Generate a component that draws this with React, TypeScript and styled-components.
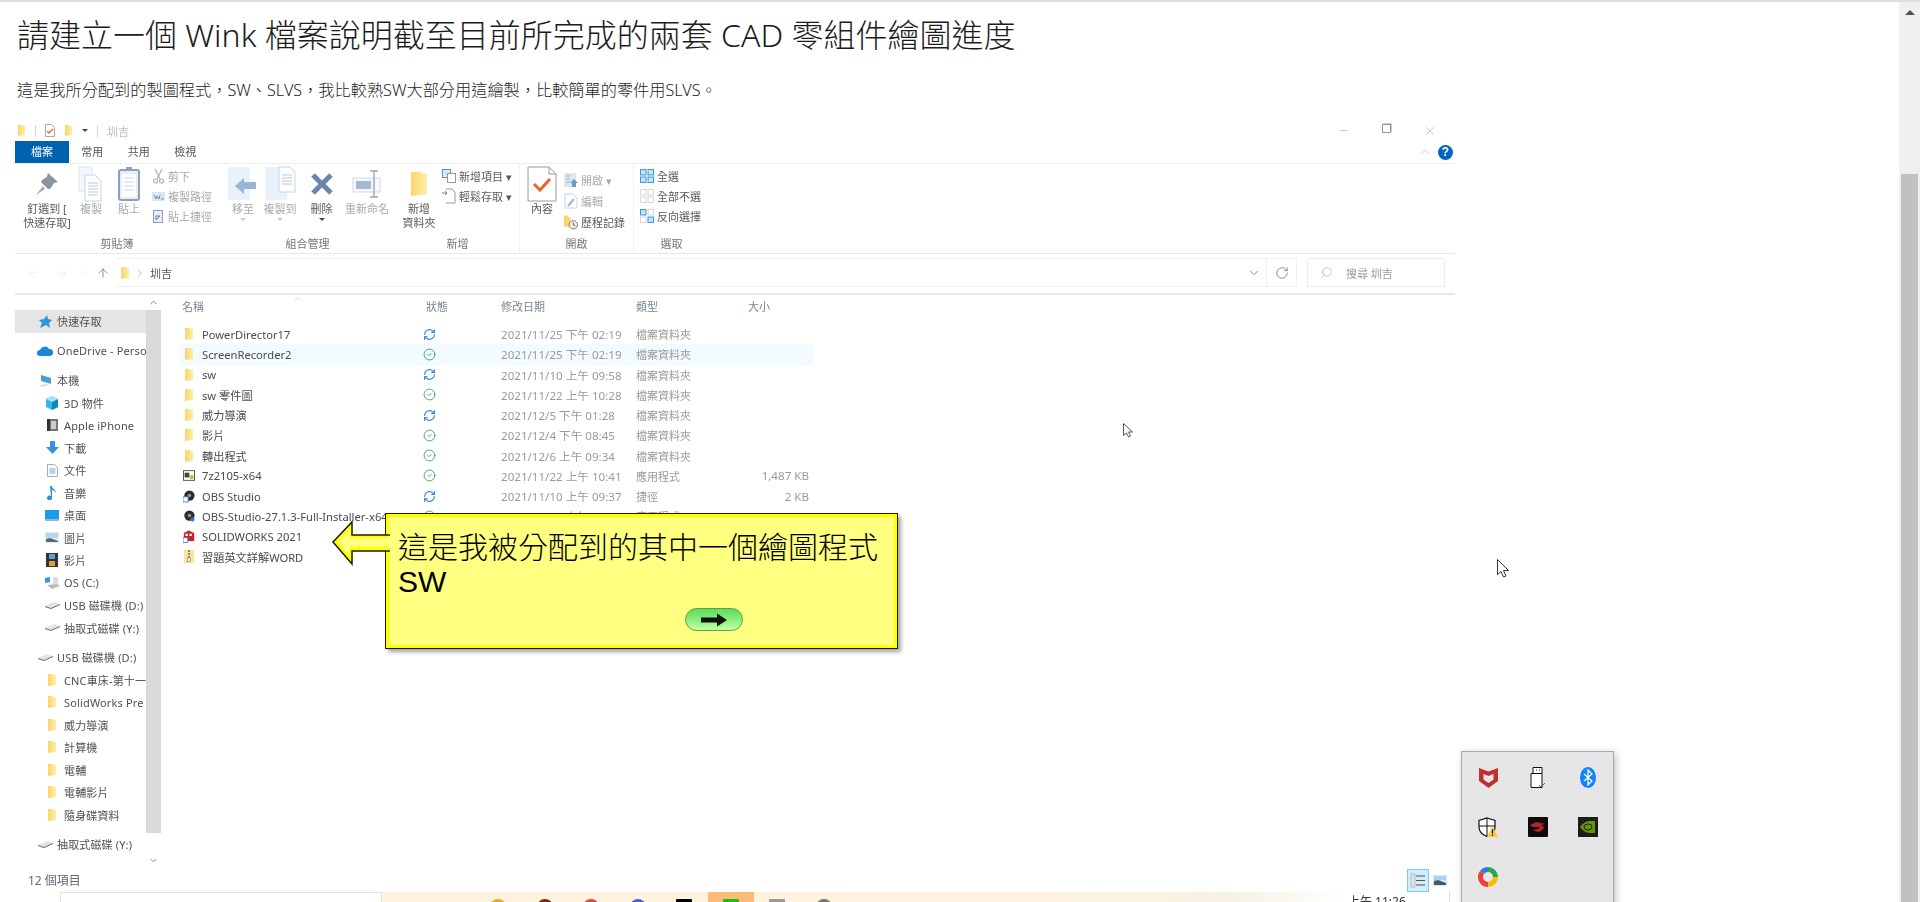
import React from 'react';
import styled, { createGlobalStyle } from 'styled-components';
import { ArrowLeft, ArrowRight, ArrowUp, ChevronDown, ChevronRight, ChevronUp, CircleCheck, Minus, RefreshCw, RotateCw, Search, X } from 'lucide-react';

const SANS = `"Noto Sans", "Noto Sans CJK TC", sans-serif`;

const Global = createGlobalStyle`
  html, body { margin: 0; padding: 0; background: #fff; overflow: hidden; }
  * { box-sizing: border-box; }
`;

const Page = styled.div`
  position: relative;
  display: flex;
  width: 1920px;
  height: 902px;
  overflow: hidden;
  border-top: 2px solid #dedede;
  font-family: ${SANS};
`;

const Main = styled.main`
  flex: 1;
  min-width: 0;
`;

const Title = styled.h1`
  margin: 0;
  padding: 13px 0 0 17px;
  height: 76px;
  font-size: 32px;
  line-height: 40px;
  font-weight: 300;
  color: #1c1c1c;
  white-space: nowrap;
`;

const Intro = styled.p`
  margin: 0;
  padding-left: 17px;
  height: 42px;
  font-size: 16.2px;
  line-height: 24px;
  font-weight: 300;
  color: #222;
  white-space: nowrap;
`;

const PageScroll = styled.div`
  width: 21px;
  background: #f0f0f0;
  padding: 172px 2px 0;
  position: relative;
`;

const PageScrollUp = styled.span`
  position: absolute;
  top: 8px;
  left: 6px;
  border-left: 5px solid transparent;
  border-right: 5px solid transparent;
  border-bottom: 5px solid #505050;
`;

const PageScrollThumb = styled.div`
  height: 100%;
  background: #c1c1c1;
`;

const Explorer = styled.section`
  width: 1440px;
  margin-left: 15px;
  height: 782px;
  overflow: hidden;
  color: #666;
  font-size: 11px;
  filter: blur(0.35px);
`;

const Qat = styled.div`
  display: flex;
  align-items: center;
  gap: 9px;
  height: 21px;
  padding: 0 4px 0 2px;
  color: #bdbdbd;
`;

const QatSep = styled.span`
  width: 1px;
  height: 12px;
  background: #d8d8d8;
`;

const WinButtons = styled.div`
  display: flex;
  margin-left: auto;
  color: #a0a0a0;
`;

const WinButton = styled.span`
  width: 43px;
  display: flex;
  justify-content: center;
`;

const MaxGlyph = styled.span`
  width: 9px;
  height: 9px;
  border: 1px solid #999;
  box-shadow: 1px -1px 0 -0.2px #bbb;
`;

const Tabs = styled.div`
  display: flex;
  align-items: center;
  height: 23px;
  border-bottom: 1px solid #efefef;
  padding-right: 2px;
`;

const Tab = styled.span<{ $active?: boolean }>`
  width: ${p => (p.$active ? '54px' : '46.5px')};
  height: 22px;
  line-height: 21px;
  text-align: center;
  font-size: 11px;
  color: ${p => (p.$active ? '#fff' : '#555')};
  background: ${p => (p.$active ? '#0063b1' : 'transparent')};
`;

const Help = styled.span`
  width: 15px;
  height: 15px;
  margin-left: 6px;
  border-radius: 50%;
  background: #0067c0;
  color: #fff;
  font: bold 12px/15px "Liberation Sans", sans-serif;
  text-align: center;
`;

const Ribbon = styled.div`
  display: flex;
  height: 90px;
  border-bottom: 1px solid #e9e9e9;
`;

const Group = styled.div<{ $w: number; $line?: boolean }>`
  width: ${p => p.$w}px;
  display: flex;
  flex-direction: column;
  border-right: 1px solid ${p => (p.$line ? '#f1f1f1' : 'transparent')};
`;

const GroupBody = styled.div<{ $pad?: number }>`
  display: flex;
  height: 73px;
  padding-left: ${p => p.$pad ?? 0}px;
`;

const GroupLabel = styled.div`
  height: 14px;
  line-height: 14px;
  text-align: center;
  color: #777;
`;

const Big = styled.div<{ $w: number; $dark?: boolean }>`
  width: ${p => p.$w}px;
  padding-top: 2px;
  display: flex;
  flex-direction: column;
  align-items: center;
  line-height: 14px;
  text-align: center;
  white-space: nowrap;
  color: ${p => (p.$dark ? '#5a5a5a' : '#a9a9a9')};
`;

const BigIcon = styled.div`
  height: 36px;
  display: flex;
  align-items: center;
  justify-content: center;
`;

const Caret = styled.span<{ $dark?: boolean }>`
  margin-top: 2px;
  border-left: 3px solid transparent;
  border-right: 3px solid transparent;
  border-top: 3px solid ${p => (p.$dark ? '#444' : '#ccc')};
`;

const QatCaret = styled(Caret)`
  margin-top: 0;
  width: 6px;
  border-top-color: #444;
`;

const Stack = styled.div<{ $top?: number; $row?: number }>`
  padding-top: ${p => p.$top ?? 2}px;
  display: grid;
  grid-auto-rows: ${p => p.$row ?? 20}px;
  align-items: center;
`;

const Small = styled.div<{ $dark?: boolean }>`
  display: flex;
  align-items: center;
  gap: 3px;
  white-space: nowrap;
  color: ${p => (p.$dark ? '#5a5a5a' : '#a9a9a9')};
`;

const SmallIcon = styled.span`
  width: 14px;
  height: 14px;
  display: flex;
  align-items: center;
  justify-content: center;
`;

const AddressRow = styled.div`
  display: flex;
  height: 41px;
  padding: 4px 10px 0 0;
  border-bottom: 2px solid #e8e8e8;
  color: #c9c9c9;
`;

const AddressNav = styled.div`
  width: 101px;
  padding-left: 4px;
  height: 29px;
  display: grid;
  grid-template-columns: 28px 29px 16px 22px;
  align-items: center;
  justify-items: center;
  color: #e2e2e2;
`;

const AddressBox = styled.div`
  flex: 1;
  height: 29px;
  display: flex;
  align-items: center;
  padding-left: 4px;
  gap: 5px;
  border: 1px solid #efefef;
  border-left: none;
  color: #555;
`;

const Refresh = styled.span`
  width: 30px;
  height: 27px;
  display: flex;
  align-items: center;
  justify-content: center;
  border-left: 1px solid #efefef;
  color: #777;
`;

const SearchBox = styled.div`
  width: 138px;
  height: 29px;
  margin-left: 10px;
  display: flex;
  align-items: center;
  gap: 13px;
  padding-left: 12px;
  border: 1px solid #ececec;
  color: #9a9a9a;
`;

const FlipSearch = styled(Search)`
  transform: scaleX(-1);
`;

const Body = styled.div`
  display: flex;
  height: 573px;
`;

const NavPane = styled.nav`
  width: 146px;
  display: flex;
  flex-shrink: 0;
`;

const Tree = styled.div`
  width: 131px;
  padding-top: 15px;
  overflow: hidden;
`;

const TreeRow = styled.div<{ $level: number; $gap?: boolean; $selected?: boolean }>`
  display: flex;
  align-items: center;
  gap: 4px;
  height: 22.5px;
  margin-top: ${p => (p.$gap ? 7 : 0)}px;
  padding-left: ${p => (p.$level === 1 ? 22 : 29)}px;
  background: ${p => (p.$selected ? '#e5e5e5' : 'transparent')};
  color: #4f4f4f;
  font-size: 11px;
  letter-spacing: 0.15px;
  white-space: nowrap;
`;

const TreeIcon = styled.span`
  width: 16px;
  height: 16px;
  flex-shrink: 0;
  display: flex;
  align-items: center;
  justify-content: center;
`;

const NavScroll = styled.div`
  width: 15px;
  display: flex;
  flex-direction: column;
  align-items: center;
  color: #555;
`;

const NavScrollEnd = styled.div<{ $h: number; $bottom?: boolean }>`
  height: ${p => p.$h}px;
  display: flex;
  align-items: ${p => (p.$bottom ? 'flex-end' : 'center')};
`;

const NavTrack = styled.div`
  width: 15px;
  height: 523px;
  background: #d9d9d9;
`;

const FileList = styled.div`
  flex: 1;
  padding-left: 19px;
`;

const Columns = `
  display: grid;
  grid-template-columns: 243px 78px 135px 100px 73px;
  align-items: center;
`;

const HeaderRow = styled.div`
  ${Columns}
  height: 22px;
  color: #7a8794;
  font-size: 11px;
  margin-bottom: 7px;
  position: relative;
`;

const HeaderCell = styled.span<{ $pad?: number }>`
  padding-left: ${p => p.$pad ?? 0}px;
`;

const SortMark = styled.span`
  position: absolute;
  left: 112px;
  top: -2px;
  color: #b8b8b8;
`;

const FileRow = styled.div<{ $hot?: boolean }>`
  ${Columns}
  width: 633px;
  height: 20.25px;
  background: ${p => (p.$hot ? '#f2fbff' : 'transparent')};
  font-size: 11.6px;
  color: #9a9a9a;
  white-space: nowrap;
`;

const NameCell = styled.span`
  display: flex;
  align-items: center;
  gap: 7px;
  padding-left: 3px;
  color: #4a4a4a;
  font-size: 11.2px;
`;

const FileIcon = styled.span`
  width: 12px;
  height: 14px;
  display: flex;
  align-items: center;
  justify-content: center;
`;

const StatusCell = styled.span`
  display: flex;
  width: 14px;
`;

const TypeCell = styled.span`
  font-size: 11px;
`;

const SizeCell = styled.span`
  text-align: right;
`;

const StatusBar = styled.div`
  display: flex;
  align-items: center;
  justify-content: space-between;
  height: 24px;
  padding: 0 8px 0 13px;
  color: #5d6b7a;
  font-size: 12px;
`;

const ViewIcons = styled.div`
  display: flex;
  align-items: center;
  gap: 4px;
`;

const DetailsView = styled.span`
  width: 22px;
  height: 23px;
  display: flex;
  align-items: center;
  justify-content: center;
  background: #cdeefd;
  border: 1px solid #7dcbf0;
`;

const Taskbar = styled.div`
  display: flex;
  height: 10px;
  padding-left: 45px;
  overflow: hidden;
`;

const TaskSearch = styled.div`
  width: 322px;
  height: 12px;
  background: #fff;
  border: 1px solid #e2e2e2;
`;

const TaskStrip = styled.div`
  width: 963px;
  padding-left: 93px;
  display: flex;
  background: linear-gradient(90deg, #fdf2dd 0%, #fdf3e0 70%, #f7f1e4 88%, #fff 100%);
`;

const TaskTile = styled.div<{ $active?: boolean }>`
  width: 46.5px;
  display: flex;
  justify-content: center;
  padding-top: 7px;
  background: ${p => (p.$active ? '#ffb97a' : 'transparent')};
`;

const TaskGlyph = styled.span<{ $color: string; $round?: boolean }>`
  width: 16px;
  height: 16px;
  background: ${p => p.$color};
  border-radius: ${p => (p.$round ? '50%' : '1px')};
`;

const Clock = styled.div`
  width: 105px;
  padding: 3px 0 0 3px;
  font-size: 12px;
  line-height: 14px;
  color: #333;
  border-right: 1px solid #ddd;
`;

const Callout = styled.aside`
  position: absolute;
  left: 385px;
  top: 511px;
  width: 513px;
  height: 136px;
  padding: 17px 0 0 12px;
  background: #ffff80;
  border: 1px solid #1c1c00;
  box-shadow: inset 0 0 0 3px #ffff00, 3px 3px 4px rgba(0, 0, 0, 0.35);
  font: 300 30px/34px "Liberation Sans", "Noto Sans CJK TC", sans-serif;
  color: #000;
`;

const CalloutArrow = styled.svg`
  position: absolute;
  left: -54px;
  top: 6px;
`;

const NextButton = styled.button`
  display: flex;
  align-items: center;
  justify-content: center;
  width: 58px;
  height: 23px;
  margin: 9px 0 0 287px;
  padding: 0;
  border: 1px solid #5f9f4c;
  border-radius: 12px;
  background: linear-gradient(180deg, #5fdc5f 0%, #8cf07c 55%, #c4ffa8 100%);
`;

const Tray = styled.aside`
  position: absolute;
  left: 1462px;
  top: 750px;
  width: 151px;
  height: 160px;
  padding-left: 1px;
  background: #e6e6e6;
  box-shadow: 0 0 0 1px #a8a8a8, 2px 2px 8px rgba(0, 0, 0, 0.3);
  display: grid;
  grid-template-columns: repeat(3, 50px);
  grid-auto-rows: 50px;
  place-items: center;
`;

const Cursor = styled.svg<{ $x: number; $y: number }>`
  position: absolute;
  left: ${p => p.$x}px;
  top: ${p => p.$y}px;
`;

const Folder = ({ w = 10, h = 12 }: { w?: number; h?: number }) => (
  <svg width={w} height={h} viewBox="0 0 10 12">
    <defs>
      <linearGradient id="fg" x1="0" x2="1" y1="0" y2="0">
        <stop offset="0" stopColor="#fbd46a" />
        <stop offset="1" stopColor="#ffeea8" />
      </linearGradient>
    </defs>
    <path d="M1 0h5l1 1h2v10l-8 1z" fill="url(#fg)" />
  </svg>
);

const Pin = () => (
  <svg width="30" height="30" viewBox="0 0 30 30">
    <path d="M16 4l10 9-4 1-4 6-2 0-7-7 1-2 5-3z" fill="#8b939b" />
    <path d="M11 17l-7 9 9-6z" fill="#a4abb2" />
  </svg>
);

const PagesIcon = () => (
  <svg width="26" height="36" viewBox="0 0 26 36">
    <path d="M1 1h13v24H1z" fill="#f4f7fb" stroke="#dbe3ee" />
    <path d="M7 9h10l6 6v20H7z" fill="#fff" stroke="#c3d3e6" />
    <path d="M10 17h10M10 20h10M10 23h10M10 26h10M10 29h10" stroke="#b5c8e0" />
  </svg>
);

const ClipboardIcon = () => (
  <svg width="22" height="36" viewBox="0 0 22 36">
    <rect x="1" y="4" width="20" height="30" rx="2" fill="#e8edf7" stroke="#8b9fc0" strokeWidth="2" />
    <rect x="4" y="8" width="14" height="23" fill="#fff" />
    <path d="M6 12h10M6 16h10M6 20h10M6 24h10" stroke="#c9d6ea" />
    <path d="M8 4h6V1H8z" fill="#8b9fc0" />
  </svg>
);

const Scissors = () => (
  <svg width="13" height="15" viewBox="0 0 13 15" fill="none" stroke="#aab3bd" strokeWidth="1.2">
    <path d="M3 0l5 10M10 0L5 10" />
    <circle cx="3.5" cy="12" r="2" />
    <circle cx="9.5" cy="12" r="2" />
  </svg>
);

const PathIcon = () => (
  <svg width="13" height="9" viewBox="0 0 13 9">
    <rect width="13" height="9" fill="#dbe6f3" />
    <path d="M2 3l2 4 1-3 2 3 1-4M9 7h3" stroke="#6f8fb3" fill="none" />
  </svg>
);

const ShortcutPaste = () => (
  <svg width="10" height="14" viewBox="0 0 10 14">
    <rect x=".5" y="1.5" width="9" height="12" fill="#e8edf7" stroke="#8b9fc0" />
    <path d="M3 11V7h4M3 11l4-4" stroke="#5b7fae" fill="none" />
  </svg>
);

const MoveIcon = ({ copy }: { copy?: boolean }) => (
  <svg width="34" height="36" viewBox="0 0 34 36">
    <path d="M2 1h22v33H2z" fill="#e9f1fb" />
    {copy ? (
      <>
        <path d="M16 1h11l5 5v20H16z" fill="#fff" stroke="#c3d3e6" />
        <path d="M19 9h10M19 12h10M19 15h10M19 18h10" stroke="#b5c8e0" />
      </>
    ) : (
      <path d="M28 14v7h-12v5l-9-8 9-8v4z" fill="#9ab4d6" transform="translate(2 2)" />
    )}
  </svg>
);

const DeleteIcon = () => (
  <svg width="24" height="24" viewBox="0 0 24 24">
    <path d="M3 3l18 18M21 3L3 21" stroke="#6d85ad" strokeWidth="5" />
  </svg>
);

const RenameIcon = () => (
  <svg width="30" height="30" viewBox="0 0 30 30">
    <rect x="1" y="9" width="27" height="14" fill="#f5f8fc" stroke="#d3dbe6" />
    <rect x="4" y="12" width="15" height="8" fill="#a7b9d2" />
    <path d="M22 2v26M18 2h8M18 28h8" stroke="#9aa8ba" strokeWidth="1.4" />
  </svg>
);

const NewItemIcon = () => (
  <svg width="14" height="14" viewBox="0 0 14 14">
    <rect x=".5" y=".5" width="8" height="8" fill="#dbe8f6" stroke="#5b8fc6" />
    <rect x="5.5" y="4.5" width="8" height="9" fill="#fff" stroke="#8f9aa6" />
  </svg>
);

const EasyIcon = () => (
  <svg width="14" height="16" viewBox="0 0 14 16" fill="none">
    <path d="M4 1h6l3 3v11H4" stroke="#8f9aa6" />
    <path d="M0 5h5M3 3l2 2-2 2" stroke="#3f8ed8" />
  </svg>
);

const PropsIcon = () => (
  <svg width="30" height="36" viewBox="0 0 30 36">
    <path d="M1 1h21l7 7v27H1z" fill="#fff" stroke="#9a9a9a" />
    <path d="M22 1v7h7" fill="none" stroke="#9a9a9a" />
    <path d="M7 18l6 6 10-11" fill="none" stroke="#e6652c" strokeWidth="3" />
  </svg>
);

const OpenIcon = () => (
  <svg width="14" height="16" viewBox="0 0 14 16">
    <rect x="0" y="1" width="12" height="14" fill="#dde7f2" />
    <path d="M2 4h4M2 7h4M2 10h4" stroke="#9fb2c9" />
    <path d="M10 7l4 4h-2v4H8v-4H6z" fill="#6f9bcb" />
  </svg>
);

const EditIcon = () => (
  <svg width="14" height="16" viewBox="0 0 14 16">
    <path d="M1 1h8l4 4v10H1z" fill="#fff" stroke="#c3d3e6" />
    <path d="M4 13l6-7" stroke="#9ab9da" strokeWidth="2" />
  </svg>
);

const HistoryIcon = () => (
  <svg width="15" height="16" viewBox="0 0 15 16">
    <path d="M0 1h4l1 2h2v10H0z" fill="#fbd46a" />
    <circle cx="10" cy="11" r="4.5" fill="#eee" stroke="#777" />
    <path d="M10 8.5V11l2 1" stroke="#555" fill="none" />
  </svg>
);

const SelectIcon = ({ mode }: { mode: 'all' | 'none' | 'invert' }) => {
  const on = '#3f96d8';
  const off = '#d8d8d8';
  const cells = mode === 'all' ? [1, 1, 1, 1] : mode === 'none' ? [0, 0, 0, 0] : [1, 0, 0, 1];
  return (
    <svg width="14" height="14" viewBox="0 0 14 14">
      {[[0, 0], [7.5, 0], [0, 7.5], [7.5, 7.5]].map(([x, y], i) => (
        <rect key={i} x={x + 0.5} y={y + 0.5} width="5.5" height="5.5" fill={cells[i] ? '#bfe3fa' : '#fff'} stroke={cells[i] ? on : off} />
      ))}
    </svg>
  );
};

const SevenZipIcon = () => (
  <svg width="15" height="13" viewBox="0 0 15 13">
    <rect x=".5" y=".5" width="14" height="12" fill="#fff" stroke="#333" />
    <rect x="2" y="3" width="6" height="6" fill="#444" />
    <rect x="9" y="6" width="4" height="5" fill="#e0a92c" />
  </svg>
);

const ObsIcon = ({ shortcut }: { shortcut?: boolean }) => (
  <svg width="14" height="14" viewBox="0 0 14 14">
    <circle cx="7.5" cy="6.5" r="6" fill="#2d2d2d" />
    <circle cx="7.5" cy="6.5" r="2" fill="#999" />
    {shortcut ? <rect x="0" y="8" width="6" height="6" fill="#fff" stroke="#3b78c4" /> : <circle cx="11" cy="11" r="2.5" fill="#3b78c4" />}
  </svg>
);

const SolidworksIcon = () => (
  <svg width="15" height="15" viewBox="0 0 15 15">
    <path d="M1 3l6-3 7 3v10H1z" fill="#c8202c" />
    <path d="M3 4h3v3H3zM8 4h3v3H8z" fill="#fff" />
    <rect x="0" y="9" width="6" height="6" fill="#fff" stroke="#3b78c4" />
  </svg>
);

const ZipIcon = () => (
  <svg width="10" height="13" viewBox="0 0 10 13">
    <path d="M0 0h10v13H0z" fill="#fde58f" />
    <path d="M4 0h2v2H4zM4 3h2v2H4zM4 6h2v2H4z" fill="#888" />
    <rect x="3.5" y="8" width="3" height="3.5" fill="#fff" stroke="#777" strokeWidth=".6" />
  </svg>
);

const Star = () => (
  <svg width="14" height="13" viewBox="0 0 14 13">
    <path d="M9 0l1 4 4 1-3 3 1 5-4-3-6 3 2-5-3-3 5-1z" fill="#2f93dd" />
  </svg>
);

const Cloud = () => (
  <svg width="16" height="10" viewBox="0 0 16 10">
    <path d="M3 10a3 3 0 0 1 0-6 5 5 0 0 1 9-1 3.5 3.5 0 0 1 1 7z" fill="#1a86d8" />
  </svg>
);

const PcIcon = () => (
  <svg width="15" height="13" viewBox="0 0 15 13">
    <path d="M3 1l10 3v6L3 7z" fill="#4a9ad8" />
    <path d="M0 11l9-1 3 1-7 2z" fill="#ddd" />
  </svg>
);

const CubeIcon = () => (
  <svg width="14" height="14" viewBox="0 0 14 14">
    <path d="M7 0l6 3v8l-6 3-6-3V3z" fill="#35b8e8" />
    <path d="M7 6l6-3v8l-6 3z" fill="#0f86c4" />
    <path d="M1 3l6-3 6 3-6 3z" fill="#a5e4f8" />
  </svg>
);

const PhoneIcon = () => (
  <svg width="11" height="12" viewBox="0 0 11 12">
    <rect width="11" height="12" fill="#777" />
    <rect x="0" width="3" height="12" fill="#333" />
    <rect x="4" y="2" width="5" height="8" fill="#ccc" />
  </svg>
);

const DownIcon = () => (
  <svg width="13" height="13" viewBox="0 0 13 13">
    <path d="M4 0h5v6h4l-6.500 7L0 6h4z" fill="#3f8ed8" />
  </svg>
);

const DocIcon = () => (
  <svg width="11" height="13" viewBox="0 0 11 13">
    <path d="M.5.5h7l3 3v9H.5z" fill="#fff" stroke="#aaa" />
    <path d="M2.500 5h6M2.500 7h6M2.500 9h6" stroke="#6fa3d6" />
  </svg>
);

const NoteIcon = () => (
  <svg width="10" height="14" viewBox="0 0 10 14">
    <path d="M3 0h2c0 3 4 3 4 7-1-2-2-3-4-3v8a2.500 2.500 0 1 1-1-2z" fill="#2d8fdc" />
  </svg>
);

const DesktopIcon = () => (
  <svg width="14" height="11" viewBox="0 0 14 11">
    <rect width="14" height="9" fill="#1b9ce8" />
    <rect y="9" width="14" height="2" fill="#8fb9d8" />
  </svg>
);

const PictureIcon = () => (
  <svg width="14" height="11" viewBox="0 0 14 11">
    <rect width="14" height="11" fill="#e4ebf2" />
    <rect x="1" y="1" width="12" height="5" fill="#b6d6ee" />
    <path d="M1 10V7l4-1 8 3v1z" fill="#4d6b78" />
  </svg>
);

const FilmIcon = () => (
  <svg width="12" height="14" viewBox="0 0 12 14">
    <rect width="12" height="14" fill="#333" />
    <rect x="3" y="1" width="6" height="5" fill="#5ba4d8" />
    <rect x="3" y="8" width="6" height="5" fill="#e0a040" />
  </svg>
);

const SystemDrive = () => (
  <svg width="15" height="13" viewBox="0 0 15 13">
    <path d="M0 2l5-1v5l-5 1z" fill="#3f96d8" />
    <path d="M2 9l10-1 3 2-8 3z" fill="#bbb" />
    <rect x="8" y="1" width="5" height="7" fill="#ddd" />
  </svg>
);

const DriveIcon = () => (
  <svg width="15" height="7" viewBox="0 0 15 7">
    <path d="M0 4l9-4 6 2-9 4z" fill="#e4e4e4" />
    <path d="M0 4l6 2 9-4v1L6 7 0 5z" fill="#666" />
  </svg>
);

const tree: { label: string; level: 1 | 2; icon: React.ReactNode; gap?: boolean; selected?: boolean }[] = [
  { label: '快速存取', level: 1, icon: <Star />, selected: true },
  { label: 'OneDrive - Perso', level: 1, icon: <Cloud />, gap: true },
  { label: '本機', level: 1, icon: <PcIcon />, gap: true },
  { label: '3D 物件', level: 2, icon: <CubeIcon /> },
  { label: 'Apple iPhone', level: 2, icon: <PhoneIcon /> },
  { label: '下載', level: 2, icon: <DownIcon /> },
  { label: '文件', level: 2, icon: <DocIcon /> },
  { label: '音樂', level: 2, icon: <NoteIcon /> },
  { label: '桌面', level: 2, icon: <DesktopIcon /> },
  { label: '圖片', level: 2, icon: <PictureIcon /> },
  { label: '影片', level: 2, icon: <FilmIcon /> },
  { label: 'OS (C:)', level: 2, icon: <SystemDrive /> },
  { label: 'USB 磁碟機 (D:)', level: 2, icon: <DriveIcon /> },
  { label: '抽取式磁碟 (Y:)', level: 2, icon: <DriveIcon /> },
  { label: 'USB 磁碟機 (D:)', level: 1, icon: <DriveIcon />, gap: true },
  { label: 'CNC車床-第十一', level: 2, icon: <Folder /> },
  { label: 'SolidWorks Pre', level: 2, icon: <Folder /> },
  { label: '威力導演', level: 2, icon: <Folder /> },
  { label: '計算機', level: 2, icon: <Folder /> },
  { label: '電輔', level: 2, icon: <Folder /> },
  { label: '電輔影片', level: 2, icon: <Folder /> },
  { label: '隨身碟資料', level: 2, icon: <Folder /> },
  { label: '抽取式磁碟 (Y:)', level: 1, icon: <DriveIcon />, gap: true },
];

type FileItem = { name: string; icon: React.ReactNode; status?: 'sync' | 'ok'; date?: string; type?: string; size?: string; hot?: boolean };

const FOLDER = '檔案資料夾';

const files: FileItem[] = [
  { name: 'PowerDirector17', icon: <Folder />, status: 'sync', date: '2021/11/25 下午 02:19', type: FOLDER },
  { name: 'ScreenRecorder2', icon: <Folder />, status: 'ok', date: '2021/11/25 下午 02:19', type: FOLDER, hot: true },
  { name: 'sw', icon: <Folder />, status: 'sync', date: '2021/11/10 上午 09:58', type: FOLDER },
  { name: 'sw 零件圖', icon: <Folder />, status: 'ok', date: '2021/11/22 上午 10:28', type: FOLDER },
  { name: '威力導演', icon: <Folder />, status: 'sync', date: '2021/12/5 下午 01:28', type: FOLDER },
  { name: '影片', icon: <Folder />, status: 'ok', date: '2021/12/4 下午 08:45', type: FOLDER },
  { name: '轉出程式', icon: <Folder />, status: 'ok', date: '2021/12/6 上午 09:34', type: FOLDER },
  { name: '7z2105-x64', icon: <SevenZipIcon />, status: 'ok', date: '2021/11/22 上午 10:41', type: '應用程式', size: '1,487 KB' },
  { name: 'OBS Studio', icon: <ObsIcon shortcut />, status: 'sync', date: '2021/11/10 上午 09:37', type: '捷徑', size: '2 KB' },
  { name: 'OBS-Studio-27.1.3-Full-Installer-x64', icon: <ObsIcon />, status: 'ok', date: '2021/11/10 上午 09:35', type: '應用程式', size: '93,912 KB' },
  { name: 'SOLIDWORKS 2021', icon: <SolidworksIcon /> },
  { name: '習題英文詳解WORD', icon: <ZipIcon /> },
];

const ExplorerWindow = () => (
  <Explorer>
    <Qat>
      <Folder w={9} h={11} />
      <QatSep />
      <svg width="10" height="13" viewBox="0 0 10 13">
        <path d="M.5.5h6l3 3v9H.5z" fill="#fff" stroke="#aaa" />
        <path d="M2 7l2 2 4-4" stroke="#e6652c" fill="none" strokeWidth="1.4" />
      </svg>
      <Folder w={9} h={11} />
      <QatCaret />
      <QatSep />
      <span>圳吉</span>
      <WinButtons>
        <WinButton><Minus size={13} strokeWidth={1} /></WinButton>
        <WinButton><MaxGlyph /></WinButton>
        <WinButton><X size={14} strokeWidth={1} /></WinButton>
      </WinButtons>
    </Qat>
    <Tabs>
      <Tab $active>檔案</Tab>
      <Tab>常用</Tab>
      <Tab>共用</Tab>
      <Tab>檢視</Tab>
      <ChevronUp size={14} strokeWidth={1} color="#aaa" style={{ marginLeft: 'auto' }} />
      <Help>?</Help>
    </Tabs>
    <Ribbon>
      <Group $w={205}>
        <GroupBody $pad={4}>
          <Big $w={56} $dark><BigIcon><Pin /></BigIcon>釘選到 [<br />快速存取]</Big>
          <Big $w={32}><BigIcon><PagesIcon /></BigIcon>複製</Big>
          <Big $w={44}><BigIcon><ClipboardIcon /></BigIcon>貼上</Big>
          <Stack>
            <Small><SmallIcon><Scissors /></SmallIcon>剪下</Small>
            <Small><SmallIcon><PathIcon /></SmallIcon>複製路徑</Small>
            <Small><SmallIcon><ShortcutPaste /></SmallIcon>貼上捷徑</Small>
          </Stack>
        </GroupBody>
        <GroupLabel>剪貼簿</GroupLabel>
      </Group>
      <Group $w={176}>
        <GroupBody $pad={5}>
          <Big $w={36}><BigIcon><MoveIcon /></BigIcon>移至<Caret /></Big>
          <Big $w={38}><BigIcon><MoveIcon copy /></BigIcon>複製到<Caret /></Big>
          <Big $w={45} $dark><BigIcon><DeleteIcon /></BigIcon>刪除<Caret $dark /></Big>
          <Big $w={46}><BigIcon><RenameIcon /></BigIcon>重新命名</Big>
        </GroupBody>
        <GroupLabel>組合管理</GroupLabel>
      </Group>
      <Group $w={124} $line>
        <GroupBody>
          <Big $w={46} $dark><BigIcon><Folder w={20} h={32} /></BigIcon>新增<br />資料夾</Big>
          <Stack>
            <Small $dark><SmallIcon><NewItemIcon /></SmallIcon>新增項目 ▾</Small>
            <Small $dark><SmallIcon><EasyIcon /></SmallIcon>輕鬆存取 ▾</Small>
          </Stack>
        </GroupBody>
        <GroupLabel>新增</GroupLabel>
      </Group>
      <Group $w={114} $line>
        <GroupBody>
          <Big $w={44} $dark><BigIcon><PropsIcon /></BigIcon>內容</Big>
          <Stack $top={5} $row={21}>
            <Small><SmallIcon><OpenIcon /></SmallIcon>開啟 ▾</Small>
            <Small><SmallIcon><EditIcon /></SmallIcon>編輯</Small>
            <Small $dark><SmallIcon><HistoryIcon /></SmallIcon>歷程記錄</Small>
          </Stack>
        </GroupBody>
        <GroupLabel>開啟</GroupLabel>
      </Group>
      <Group $w={76}>
        <GroupBody $pad={6}>
          <Stack>
            <Small $dark><SmallIcon><SelectIcon mode="all" /></SmallIcon>全選</Small>
            <Small $dark><SmallIcon><SelectIcon mode="none" /></SmallIcon>全部不選</Small>
            <Small $dark><SmallIcon><SelectIcon mode="invert" /></SmallIcon>反向選擇</Small>
          </Stack>
        </GroupBody>
        <GroupLabel>選取</GroupLabel>
      </Group>
    </Ribbon>
    <AddressRow>
      <AddressNav>
        <ArrowLeft size={14} strokeWidth={1} />
        <ArrowRight size={14} strokeWidth={1} />
        <ChevronDown size={10} strokeWidth={1} />
        <ArrowUp size={14} strokeWidth={1.2} color="#666" />
      </AddressNav>
      <AddressBox>
        <Folder />
        <ChevronRight size={10} strokeWidth={1} />
        <span>圳吉</span>
        <ChevronDown size={14} strokeWidth={1.4} color="#777" style={{ marginLeft: 'auto' }} />
        <Refresh><RotateCw size={14} strokeWidth={1.4} /></Refresh>
      </AddressBox>
      <SearchBox>
        <FlipSearch size={13} strokeWidth={1} />
        <span>搜尋 圳吉</span>
      </SearchBox>
    </AddressRow>
    <Body>
      <NavPane>
        <Tree>
          {tree.map((t, i) => (
            <TreeRow key={i} $level={t.level} $gap={t.gap} $selected={t.selected}>
              <TreeIcon>{t.icon}</TreeIcon>
              {t.label}
            </TreeRow>
          ))}
        </Tree>
        <NavScroll>
          <NavScrollEnd $h={15}><ChevronUp size={11} strokeWidth={1.5} /></NavScrollEnd>
          <NavTrack />
          <NavScrollEnd $h={33} $bottom><ChevronDown size={11} strokeWidth={1.5} /></NavScrollEnd>
        </NavScroll>
      </NavPane>
      <FileList>
        <HeaderRow>
          <HeaderCell $pad={2}>名稱</HeaderCell>
          <HeaderCell $pad={3}>狀態</HeaderCell>
          <HeaderCell>修改日期</HeaderCell>
          <HeaderCell>類型</HeaderCell>
          <HeaderCell $pad={12}>大小</HeaderCell>
          <SortMark><ChevronUp size={12} strokeWidth={1} /></SortMark>
        </HeaderRow>
        {files.map(f => (
          <FileRow key={f.name} $hot={f.hot}>
            <NameCell><FileIcon>{f.icon}</FileIcon>{f.name}</NameCell>
            <StatusCell>
              {f.status === 'sync' && <RefreshCw size={13} strokeWidth={2} color="#2a87d8" />}
              {f.status === 'ok' && <CircleCheck size={13} strokeWidth={1.6} color="#2f9e56" />}
            </StatusCell>
            <span>{f.date}</span>
            <TypeCell>{f.type}</TypeCell>
            <SizeCell>{f.size}</SizeCell>
          </FileRow>
        ))}
      </FileList>
    </Body>
    <StatusBar>
      <span>12 個項目</span>
      <ViewIcons>
        <DetailsView>
          <svg width="16" height="15" viewBox="0 0 16 15">
            <rect x="1" y="1" width="4" height="13" fill="#e8e0d8" stroke="#999" strokeWidth=".5" />
            <path d="M6 3h9M6 7.500h9M6 12h9" stroke="#555" />
          </svg>
        </DetailsView>
        <svg width="14" height="11" viewBox="0 0 14 11">
          <rect width="14" height="11" fill="#dfe9f2" />
          <rect x="1" y="1" width="12" height="4" fill="#a9d2ee" />
          <path d="M1 10V6l4-1 8 3v2z" fill="#3f5d60" />
        </svg>
      </ViewIcons>
    </StatusBar>
    <Taskbar>
      <TaskSearch />
      <TaskStrip>
        <TaskTile><TaskGlyph $color="#e8a820" $round /></TaskTile>
        <TaskTile><TaskGlyph $color="#7a2a10" $round /></TaskTile>
        <TaskTile><TaskGlyph $color="#d84a3a" $round /></TaskTile>
        <TaskTile><TaskGlyph $color="#4a5fe0" $round /></TaskTile>
        <TaskTile><TaskGlyph $color="#000" /></TaskTile>
        <TaskTile $active><TaskGlyph $color="#0fc40f" /></TaskTile>
        <TaskTile><TaskGlyph $color="#999" /></TaskTile>
        <TaskTile><TaskGlyph $color="#777" $round /></TaskTile>
      </TaskStrip>
      <Clock>上午 11:26</Clock>
    </Taskbar>
  </Explorer>
);

const App: React.FC = () => (
  <>
    <Global />
    <Page>
      <Main>
        <Title>請建立一個 Wink 檔案說明截至目前所完成的兩套 CAD 零組件繪圖進度</Title>
        <Intro>這是我所分配到的製圖程式，SW、SLVS，我比較熟SW大部分用這繪製，比較簡單的零件用SLVS。</Intro>
        <ExplorerWindow />
      </Main>
      <PageScroll>
        <PageScrollUp />
        <PageScrollThumb />
      </PageScroll>

      <Callout>
        <CalloutArrow width="58" height="46" viewBox="0 0 58 46">
          <path d="M1 22L20 2v13h38v16H20v13z" fill="#ffff00" stroke="#1c1c00" strokeWidth="1.500" />
          <path d="M6 22l12-13v9h40v9H18v9z" fill="#ffff80" />
          <path d="M57 15.700v14.600h2V15.700z" fill="#ffff80" />
        </CalloutArrow>
        這是我被分配到的其中一個繪圖程式SW
        <NextButton aria-label="下一步">
          <svg width="28" height="14" viewBox="0 0 28 14">
            <path d="M1 4.500h16V.500l10 6.500-10 6.500v-4H1z" fill="#111" />
          </svg>
        </NextButton>
      </Callout>

      <Tray>
        <svg width="19" height="21" viewBox="0 0 19 21">
          <path d="M0 1l9.500 3.500L19 1v13l-9.500 7L0 14z" fill="#c0302f" />
          <path d="M4.500 7l5 2 5-2v5.500l-5 3.500-5-3.500z" fill="#e6e6e6" />
        </svg>
        <svg width="16" height="21" viewBox="0 0 16 21" fill="none">
          <path d="M3 .500h9v6H3z" fill="#fff" stroke="#111" />
          <path d="M1 6.500h11v14H1z" fill="#fff" stroke="#111" />
          <path d="M6 3h1M9 3h1" stroke="#111" />
          <path d="M9 18l2 2 4-4" stroke="#666" />
        </svg>
        <svg width="16" height="21" viewBox="0 0 16 21">
          <ellipse cx="8" cy="10.500" rx="8" ry="10.500" fill="#0a84ff" />
          <path d="M4 7l8 7-4 4V3l4 4-8 7" fill="none" stroke="#fff" strokeWidth="1.300" />
        </svg>
        <svg width="20" height="20" viewBox="0 0 20 20">
          <path d="M9 1l8 2.500V10c0 5-4 8-8 9.500C5 18 1 15 1 10V3.500z" fill="#fff" stroke="#111" strokeWidth="1.200" />
          <path d="M9 1v18M1 9h16" stroke="#111" />
          <path d="M14.500 9L20 20H9z" fill="#ffc83d" />
          <path d="M14.500 12.500v4M14.500 17.500v1.500" stroke="#111" strokeWidth="1.200" />
        </svg>
        <svg width="20" height="20" viewBox="0 0 20 20">
          <rect width="20" height="20" rx="1" fill="#0d0b0c" />
          <path d="M2 8l6-3 10 2-5 1 3 2c-1 5-7 6-11 3 3 0 6-1 7-3H6c-1 0-3-1-4-2z" fill="#b8202a" />
        </svg>
        <svg width="20" height="20" viewBox="0 0 20 20">
          <rect width="20" height="20" fill="#1c1c1c" />
          <path d="M12 4h5v12h-5c-4 0-8-3-10-6 2-3 6-6 10-6z" fill="#76b900" opacity=".8" />
          <ellipse cx="10" cy="10" rx="4" ry="3" fill="none" stroke="#1c1c1c" />
        </svg>
        <svg width="20" height="20" viewBox="0 0 20 20" fill="none" strokeWidth="5">
          <path d="M4 5.500A7.500 7.500 0 0 1 10 2.500" stroke="#2b7de9" />
          <path d="M10 2.500a7.500 7.500 0 0 1 7.500 7.500" stroke="#2ca84a" />
          <path d="M17.500 10a7.500 7.500 0 0 1-7.500 7.500" stroke="#fbbc05" />
          <path d="M10 17.500A7.500 7.500 0 0 1 4 5.500" stroke="#ea4335" />
        </svg>
      </Tray>

      <Cursor $x={1123} $y={421} width="10" height="15" viewBox="0 0 10 15">
        <path d="M.5.500v12l3-2.500 2 4 2-1-2-4h4z" fill="#fff" stroke="#555" />
      </Cursor>
      <Cursor $x={1497} $y={557} width="13" height="19" viewBox="0 0 13 19">
        <path d="M.5.500v15l3.500-3 2.500 5.500 2.500-1-2.500-5.500h5z" fill="#fff" stroke="#333" />
      </Cursor>
    </Page>
  </>
);

export default App;
